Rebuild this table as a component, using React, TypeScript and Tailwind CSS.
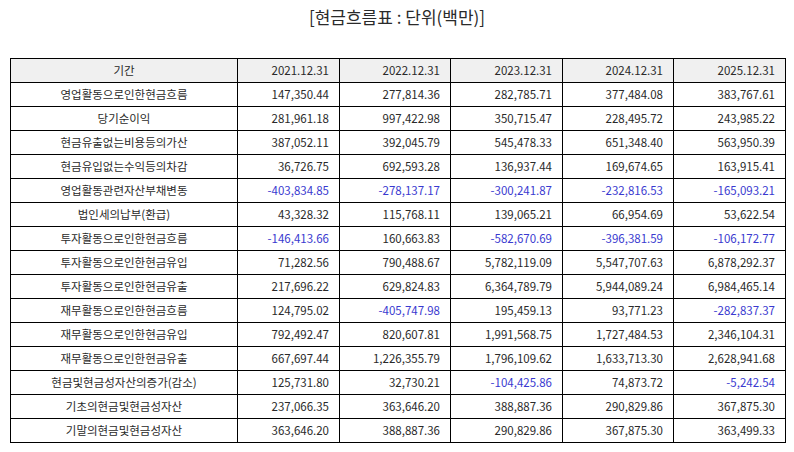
import React from 'react';

type Row = { label: string; values: string[] };

const years = ['2021.12.31', '2022.12.31', '2023.12.31', '2024.12.31', '2025.12.31'];

const rows: Row[] = [
  { label: '영업활동으로인한현금흐름', values: ['147,350.44', '277,814.36', '282,785.71', '377,484.08', '383,767.61'] },
  { label: '당기순이익', values: ['281,961.18', '997,422.98', '350,715.47', '228,495.72', '243,985.22'] },
  { label: '현금유출없는비용등의가산', values: ['387,052.11', '392,045.79', '545,478.33', '651,348.40', '563,950.39'] },
  { label: '현금유입없는수익등의차감', values: ['36,726.75', '692,593.28', '136,937.44', '169,674.65', '163,915.41'] },
  { label: '영업활동관련자산부채변동', values: ['-403,834.85', '-278,137.17', '-300,241.87', '-232,816.53', '-165,093.21'] },
  { label: '법인세의납부(환급)', values: ['43,328.32', '115,768.11', '139,065.21', '66,954.69', '53,622.54'] },
  { label: '투자활동으로인한현금흐름', values: ['-146,413.66', '160,663.83', '-582,670.69', '-396,381.59', '-106,172.77'] },
  { label: '투자활동으로인한현금유입', values: ['71,282.56', '790,488.67', '5,782,119.09', '5,547,707.63', '6,878,292.37'] },
  { label: '투자활동으로인한현금유출', values: ['217,696.22', '629,824.83', '6,364,789.79', '5,944,089.24', '6,984,465.14'] },
  { label: '재무활동으로인한현금흐름', values: ['124,795.02', '-405,747.98', '195,459.13', '93,771.23', '-282,837.37'] },
  { label: '재무활동으로인한현금유입', values: ['792,492.47', '820,607.81', '1,991,568.75', '1,727,484.53', '2,346,104.31'] },
  { label: '재무활동으로인한현금유출', values: ['667,697.44', '1,226,355.79', '1,796,109.62', '1,633,713.30', '2,628,941.68'] },
  { label: '현금및현금성자산의증가(감소)', values: ['125,731.80', '32,730.21', '-104,425.86', '74,873.72', '-5,242.54'] },
  { label: '기초의현금및현금성자산', values: ['237,066.35', '363,646.20', '388,887.36', '290,829.86', '367,875.30'] },
  { label: '기말의현금및현금성자산', values: ['363,646.20', '388,887.36', '290,829.86', '367,875.30', '363,499.33'] },
];

export default function App() {
  return (
    <div
      className="w-[794px] h-[452px] bg-white text-[#2a2a2a]"
      style={{ fontFamily: '"Noto Sans CJK KR", "Noto Sans", sans-serif' }}
    >
      {/* Title */}
      <div className="h-[36px] pt-[4px] text-center text-[17px] leading-[26px]">[현금흐름표 : 단위(백만)]</div>

      {/* Cash flow table */}
      <div className="px-[10px] pt-[22px]">
        <table className="w-[775px] table-fixed border-collapse text-[11.5px]">
          <colgroup>
            <col className="w-[227px]" />
            <col className="w-[102px]" />
            <col className="w-[111px]" />
            <col className="w-[112px]" />
            <col className="w-[111px]" />
            <col className="w-[112px]" />
          </colgroup>
          <thead>
            <tr className="h-[24px] bg-[#f0f0f0]">
              <th className="border border-black font-normal text-center">기간</th>
              {years.map((y) => (
                <th key={y} className="border border-black font-normal text-right pr-[10px]">
                  {y}
                </th>
              ))}
            </tr>
          </thead>
          <tbody>
            {rows.map((r) => (
              <tr key={r.label} className="h-[24px]">
                <td className="border border-black text-center">{r.label}</td>
                {r.values.map((v, i) => (
                  <td
                    key={i}
                    className={`border border-black text-right pr-[10px] ${v.startsWith('-') ? 'text-[#3a3ad0]' : ''}`}
                  >
                    {v}
                  </td>
                ))}
              </tr>
            ))}
          </tbody>
        </table>
      </div>
    </div>
  );
}
